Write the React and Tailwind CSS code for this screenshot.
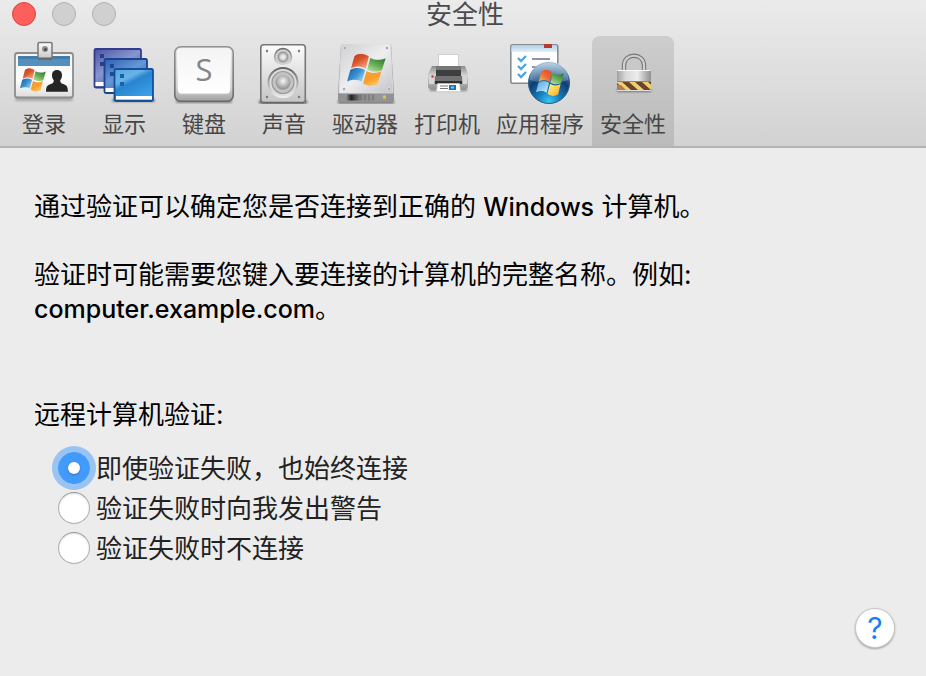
import React, { useState } from "react";

function Flag({ x, y, width, height, glow }) {
  return (
    <svg x={x} y={y} width={width} height={height} viewBox="0 0 116 98" preserveAspectRatio="none">
      <path d="M22 8C35-2 50-1 65 9L56 45C42 37 28 36 12 44Z" fill={glow ? "url(#flagRedLight)" : "url(#flagRed)"} />
      <path d="M69 13C83 20 98 21 115 14L104 49C90 56 76 55 60 48Z" fill="url(#flagGreen)" />
      <path d="M10 48C24 41 40 41 54 49L44 84C32 77 16 76 0 83Z" fill={glow ? "url(#flagBlueLight)" : "url(#flagBlue)"} />
      <path d="M58 52C72 60 88 60 102 53L92 90C78 98 62 98 48 88Z" fill={glow ? "url(#flagYellow)" : "url(#flagOrange)"} />
    </svg>
  );
}

function SharedPaints() {
  return (
    <svg className="absolute size-0" aria-hidden="true">
      <defs>
        <linearGradient id="flagRed" x1="0" y1="0" x2="0.7" y2="1">
          <stop offset="0" stopColor="#b83a12" /><stop offset="0.5" stopColor="#d8552a" /><stop offset="1" stopColor="#f4a283" />
        </linearGradient>
        <linearGradient id="flagRedLight" x1="1" y1="0" x2="0" y2="1">
          <stop offset="0" stopColor="#d94b25" /><stop offset="0.5" stopColor="#ee6a31" /><stop offset="1" stopColor="#fbc45a" />
        </linearGradient>
        <linearGradient id="flagGreen" x1="0.8" y1="0" x2="0.2" y2="1">
          <stop offset="0" stopColor="#2f7a35" /><stop offset="0.5" stopColor="#64ab50" /><stop offset="1" stopColor="#b6dba0" />
        </linearGradient>
        <linearGradient id="flagBlue" x1="0" y1="0.2" x2="1" y2="0.9">
          <stop offset="0" stopColor="#1b62a8" /><stop offset="0.5" stopColor="#3b93d2" /><stop offset="1" stopColor="#b4e0f8" />
        </linearGradient>
        <linearGradient id="flagBlueLight" x1="0" y1="0" x2="1" y2="1">
          <stop offset="0" stopColor="#4fa6e2" /><stop offset="1" stopColor="#c9edfc" />
        </linearGradient>
        <linearGradient id="flagOrange" x1="0" y1="0" x2="0.6" y2="1">
          <stop offset="0" stopColor="#f19a3c" /><stop offset="0.6" stopColor="#f9a02c" /><stop offset="1" stopColor="#fdc45c" />
        </linearGradient>
        <linearGradient id="flagYellow" x1="0" y1="0" x2="1" y2="1">
          <stop offset="0" stopColor="#fff0a0" /><stop offset="0.5" stopColor="#fcd251" /><stop offset="1" stopColor="#f2a42d" />
        </linearGradient>
        <linearGradient id="metal" x1="0" y1="0" x2="0" y2="1">
          <stop offset="0" stopColor="#fdfdfd" /><stop offset="1" stopColor="#c4c4c4" />
        </linearGradient>
        <filter id="soft" x="-20%" y="-100%" width="140%" height="300%">
          <feGaussianBlur stdDeviation="1.2" />
        </filter>
      </defs>
    </svg>
  );
}

function Icon({ children }) {
  return (
    <svg viewBox="0 0 64 64" className="size-16 shrink-0" aria-hidden="true">
      {children}
    </svg>
  );
}

function LoginIcon() {
  return (
    <Icon>
      <defs>
        <linearGradient id="card" x1="0" y1="0" x2="0" y2="1">
          <stop offset="0" stopColor="#f4f4f4" /><stop offset="0.6" stopColor="#fff" /><stop offset="1" stopColor="#dcdcdc" />
        </linearGradient>
      </defs>
      <rect x="3" y="57" width="58" height="4" rx="2" fill="#888" opacity="0.6" filter="url(#soft)" />
      <rect x="3" y="13" width="58" height="44.5" rx="2.5" fill="url(#card)" stroke="#8c8c8c" strokeWidth="1.8" />
      <rect x="6" y="16" width="52" height="10" fill="#558fbd" />
      <path d="M6 16h52v3H6z" fill="#437ba9" />
      <rect x="26" y="2.5" width="14" height="17" rx="1.5" fill="url(#metal)" stroke="#777" strokeWidth="1.5" />
      <path d="M26 18.5h14" stroke="#666" strokeWidth="2" />
      <circle cx="33" cy="9" r="3" fill="#8d8d8d" /><circle cx="33.5" cy="9.5" r="1.3" fill="#3d3d3d" />
      <Flag x="8" y="28" width="26" height="24" />
      <path d="M45 30c3.4 0 5.2 2.4 5 5.7-.2 2.4-1 3.5-1.8 4.6.1 2.4.8 3 3 3.8 3.3 1.2 4.700 2.400 4.700 7.700H34c0-5.300 1.500-6.500 4.800-7.700 2.200-.8 2.900-1.400 3-3.800-.9-1.100-1.700-2.200-1.800-4.600-.2-3.300 1.600-5.700 5-5.700z" fill="#252525" />
    </Icon>
  );
}

function DisplayIcon() {
  return (
    <Icon>
      <defs>
        <linearGradient id="d1" x1="0" y1="0" x2="0.7" y2="1"><stop offset="0" stopColor="#4a55a3" /><stop offset="0.5" stopColor="#8795cf" /><stop offset="1" stopColor="#4357a8" /></linearGradient>
        <linearGradient id="d2" x1="0" y1="0" x2="0.7" y2="1"><stop offset="0" stopColor="#2d60b0" /><stop offset="0.5" stopColor="#6696d5" /><stop offset="1" stopColor="#2a5cae" /></linearGradient>
        <linearGradient id="d3" x1="0" y1="0" x2="0.6" y2="1"><stop offset="0" stopColor="#58a5e0" /><stop offset="0.35" stopColor="#69b3e8" /><stop offset="0.5" stopColor="#2984d0" /><stop offset="1" stopColor="#3ca0e7" /></linearGradient>
      </defs>
      <rect x="20" y="59" width="43" height="3" fill="#555" opacity="0.6" filter="url(#soft)" />
      <rect x="2.5" y="9" width="46.5" height="38.5" rx="1.5" fill="url(#d1)" stroke="#343d8b" strokeWidth="1.8" />
      <rect x="3.5" y="42" width="43" height="4" fill="#fff" />
      <path d="M8 14h4v4H8zM8 22h4v4H8z" fill="#303b87" />
      <rect x="12.5" y="19" width="42.5" height="34" rx="1.5" fill="url(#d2)" stroke="#1c438e" strokeWidth="1.8" />
      <rect x="13.5" y="48" width="40" height="4" fill="#fff" />
      <path d="M18 24h4v4h-4zM18 32h4v4h-4z" fill="#1d4998" />
      <rect x="22.5" y="29" width="38.5" height="32" rx="1.5" fill="url(#d3)" stroke="#12509c" strokeWidth="1.8" />
      <rect x="24" y="56" width="36" height="3.5" fill="#fff" />
      <path d="M28 34h4v4h-4zM28 42h4v4h-4z" fill="#1761ab" />
    </Icon>
  );
}

function KeyboardIcon() {
  return (
    <Icon>
      <defs>
        <linearGradient id="keyBase" x1="0" y1="0" x2="0" y2="1"><stop offset="0" stopColor="#e5e5e5" /><stop offset="0.75" stopColor="#d3d3d3" /><stop offset="1" stopColor="#a0a0a0" /></linearGradient>
        <linearGradient id="keyEdge" x1="0" y1="0" x2="0" y2="1"><stop offset="0" stopColor="#929292" /><stop offset="1" stopColor="#6a6a6a" /></linearGradient>
        <linearGradient id="keyTop" x1="0" y1="0" x2="0" y2="1"><stop offset="0" stopColor="#f4f4f4" /><stop offset="1" stopColor="#fff" /></linearGradient>
      </defs>
      <rect x="4" y="58" width="56" height="5" rx="2" fill="#444" opacity="0.6" filter="url(#soft)" />
      <rect x="2.8" y="6.800" width="58.400" height="54.400" rx="6" fill="url(#keyBase)" stroke="url(#keyEdge)" strokeWidth="1.600" />
      <path d="M9 8h46c3 0 4 2 4 5l-1 37c0 3-2 4-4 4H10c-2 0-4-1-4-4L5 13c0-3 1-5 4-5z" fill="url(#keyTop)" />
      <path d="M7 54h50" stroke="#c8c8c8" />
      <text x="32" y="41" textAnchor="middle" fontSize="31" fill="#858585" fontFamily="'Open Sans', 'Noto Sans', sans-serif">S</text>
    </Icon>
  );
}

function SoundIcon() {
  return (
    <Icon>
      <defs>
        <radialGradient id="cone"><stop offset="0" stopColor="#f8f8f8" /><stop offset="0.3" stopColor="#d8d8d8" /><stop offset="0.55" stopColor="#999" /><stop offset="0.75" stopColor="#d5d5d5" /><stop offset="1" stopColor="#bababa" /></radialGradient>
        <radialGradient id="dome" cx="0.5" cy="0.4"><stop offset="0" stopColor="#f6f6f6" /><stop offset="1" stopColor="#9a9a9a" /></radialGradient>
        <linearGradient id="ring" x1="0" y1="0" x2="0" y2="1"><stop offset="0" stopColor="#666" /><stop offset="1" stopColor="#eee" /></linearGradient>
      </defs>
      <rect x="7" y="60" width="48" height="4" fill="#333" opacity="0.6" filter="url(#soft)" />
      <rect x="8.8" y="4.8" width="44.5" height="58" rx="3" fill="url(#metal)" stroke="#777" strokeWidth="1.6" />
      <path d="M10 62.5h42" stroke="#666" strokeWidth="1.5" />
      <circle cx="31" cy="17" r="8.5" fill="url(#cone)" stroke="url(#ring)" strokeWidth="1.5" />
      <circle cx="31" cy="42.5" r="14.5" fill="#dedede" stroke="url(#ring)" strokeWidth="2" />
      <circle cx="31" cy="42.5" r="11" fill="#c4c4c4" stroke="#999" strokeWidth="1.2" />
      <circle cx="31" cy="42.5" r="7.5" fill="url(#dome)" />
      {[15, 47].map((x) => [11, 57].map((y) => <circle key={`${x}-${y}`} cx={x} cy={y} r="1.2" fill="#777" />))}
    </Icon>
  );
}

function DriveIcon() {
  return (
    <Icon>
      <defs>
        <linearGradient id="driveTop" x1="0" y1="0" x2="1" y2="1"><stop offset="0" stopColor="#cfcfd2" /><stop offset="0.5" stopColor="#eeeef0" /><stop offset="1" stopColor="#c4c4c8" /></linearGradient>
        <linearGradient id="driveFront" x1="0" y1="0" x2="1" y2="0"><stop offset="0" stopColor="#aaa" /><stop offset="0.15" stopColor="#222" /><stop offset="0.4" stopColor="#8b8b8b" /><stop offset="1" stopColor="#999" /></linearGradient>
      </defs>
      <rect x="5" y="60" width="56" height="4" fill="#444" opacity="0.6" filter="url(#soft)" />
      <path d="M8 4h50l3 50v6q0 2-2 2H7q-2 0-2-2v-6z" fill="#929296" />
      <path d="M8.5 4h49L60 53H6z" fill="url(#driveTop)" stroke="#dfdfe1" strokeWidth="0.8" />
      <path d="M12 54.5h41v6H14z" fill="url(#driveFront)" />
      <path d="M28 54.5v6m4-6v6m4-6v6m4-6v6" stroke="#6d6d6d" />
      <rect x="50" y="55.5" width="3" height="3" fill="#d9c93c" />
      {[[12, 8], [54, 8], [11, 49], [56, 49]].map(([x, y]) => <circle key={`${x}-${y}`} cx={x} cy={y} r="1.5" fill="#999" stroke="#f4f4f4" strokeWidth="0.6" />)}
      <Flag x="14" y="13.5" width="39" height="33" />
    </Icon>
  );
}

function PrinterIcon() {
  return (
    <Icon>
      <defs>
        <linearGradient id="printerBody" x1="0" y1="0" x2="0" y2="1"><stop offset="0" stopColor="#8b8b8b" /><stop offset="0.4" stopColor="#d4d4d4" /><stop offset="1" stopColor="#929292" /></linearGradient>
      </defs>
      <rect x="15" y="48" width="37" height="3" fill="#555" opacity="0.6" filter="url(#soft)" />
      <path d="M23.5 14.5h20V28h-20z" fill="#fff" stroke="#bbb" strokeWidth="0.6" />
      <path d="M17 26h33l3 8v12q0 3-3 3H16q-3 0-3-3V34z" fill="url(#printerBody)" />
      <path d="M21 26h25v4H21z" fill="#777" />
      <path d="M21 30h25v6H21z" fill="#3e3e3e" />
      <path d="M20 36h27v5H20z" fill="#727272" />
      <path d="M14 36h5v8h-5zM48 36h4v8h-4z" fill="#d6d6d6" />
      <path d="M20 41h27v3H20z" fill="#303030" />
      <path d="M22.5 43.5h22l1 8h-24z" fill="#fff" stroke="#ccc" strokeWidth="0.6" />
      <path d="M25 46h8m-8 2.500h8" stroke="#777" />
      <path d="M34 45h7v5h-7z" fill="#1673b9" /><path d="M36 46.500h3v2h-3z" fill="#8ac9ed" />
      <circle cx="17.5" cy="36.5" r="1.2" fill="#e42c38" />
    </Icon>
  );
}

function AppsIcon() {
  return (
    <Icon>
      <defs>
        <linearGradient id="winBar" x1="0" y1="0" x2="0" y2="1"><stop offset="0" stopColor="#b5d2e7" /><stop offset="1" stopColor="#e0f0fa" /></linearGradient>
        <radialGradient id="orb" cx="0.5" cy="0.95" r="0.9"><stop offset="0" stopColor="#38c8f5" /><stop offset="0.3" stopColor="#1580be" /><stop offset="0.65" stopColor="#123c72" /><stop offset="1" stopColor="#668eaf" /></radialGradient>
        <linearGradient id="orbShine" x1="0" y1="0" x2="0" y2="1"><stop offset="0" stopColor="#e5f1fa" stopOpacity="0.7" /><stop offset="1" stopColor="#7eaad0" stopOpacity="0.35" /></linearGradient>
      </defs>
      <rect x="2.8" y="4.8" width="47" height="38.5" rx="2" fill="#fff" stroke="#858c92" strokeWidth="1.6" />
      <path d="M3.6 5.6h45.4V12H3.600z" fill="url(#winBar)" />
      <path d="M36 4h8v4h-8z" fill="#ba3732" />
      <path d="M10 18l3 3 5-5M10 26l3 3 5-5M10 34l3 3 5-5" fill="none" stroke="#4ca7dd" strokeWidth="2.3" />
      <path d="M24 19h18M24 27h14" stroke="#9291aa" strokeWidth="2" />
      <circle cx="41" cy="43" r="20.5" fill="url(#orb)" stroke="#285e88" />
      <path d="M21.5 40C22 15 60 15 60.5 40c-12 4-26 4-39 0z" fill="url(#orbShine)" />
      <Flag x="28" y="29.5" width="28" height="27" glow />
    </Icon>
  );
}

function LockIcon() {
  return (
    <Icon>
      <defs>
        <linearGradient id="lockBody" x1="0" y1="0" x2="1" y2="0"><stop offset="0" stopColor="#a2a2a2" /><stop offset="0.25" stopColor="#d8d8d8" /><stop offset="0.6" stopColor="#ececec" /><stop offset="1" stopColor="#8f8f8f" /></linearGradient>
        <clipPath id="lockStripe"><path d="M16 42h34v8H16z" /></clipPath>
      </defs>
      <rect x="16" y="49" width="34" height="3" fill="#555" opacity="0.7" filter="url(#soft)" />
      <path d="M23 31v-5.5c0-13 20-13 20 0V31" fill="none" stroke="#777" strokeWidth="4.4" />
      <path d="M23 31v-5.5c0-13 20-13 20 0V31" fill="none" stroke="#d0d0d0" strokeWidth="2.2" />
      <rect x="16" y="30" width="34" height="21" rx="1" fill="url(#lockBody)" />
      <path d="M16.5 30.5h33" stroke="#fafafa" />
      <path d="M16 41.5h34" stroke="#888" />
      <g clipPath="url(#lockStripe)">
        <path d="M16 42h34v8H16z" fill="#6b4429" />
        <path d="M15 42h6l9 8h-6zM28 42h6l9 8h-6zM41 42h6l9 8h-6z" fill="#edd070" />
        <path d="M16 45h4l5 5h-9z" fill="#b97958" />
      </g>
      <path d="M16 50.5h34" stroke="#ddd" />
    </Icon>
  );
}

const tabs = [
  ["登录", LoginIcon],
  ["显示", DisplayIcon],
  ["键盘", KeyboardIcon],
  ["声音", SoundIcon],
  ["驱动器", DriveIcon],
  ["打印机", PrinterIcon],
  ["应用程序", AppsIcon],
  ["安全性", LockIcon],
];

const options = ["即使验证失败，也始终连接", "验证失败时向我发出警告", "验证失败时不连接"];

export default function App() {
  const [tab, setTab] = useState("安全性");
  const [choice, setChoice] = useState(0);
  return (
    <div className="min-h-screen bg-[#ececec] font-[Inter,'Noto_Sans_CJK_SC',sans-serif] text-[26px] leading-[34px] text-black">
      <SharedPaints />
      <header className="border-b-2 border-[#b4b4b4] bg-linear-to-b from-[#ebebeb] to-[#d2d2d2]">
        <div className="grid h-9 grid-cols-[1fr_auto_1fr] items-start">
          <div className="flex gap-4 pt-0.5 pl-3">
            <button aria-label="关闭" className="size-6 rounded-full border border-[#e2443f] bg-[#fc605c]" />
            <button aria-label="最小化" className="size-6 rounded-full border border-[#b1b1b1] bg-[#d0d0d0]" />
            <button aria-label="缩放" className="size-6 rounded-full border border-[#b1b1b1] bg-[#d0d0d0]" />
          </div>
          <h1 className="pl-1 leading-[30px] text-[#4b4b4b]">安全性</h1>
        </div>
        <nav className="flex pl-1">
          {tabs.map(([name, Drawing]) => (
            <button
              key={name}
              onClick={() => setTab(name)}
              aria-pressed={tab === name}
              className="flex h-[110px] min-w-20 flex-col items-center rounded-t-lg px-2 pt-1 text-[22px] leading-10 text-[#464646] aria-pressed:bg-linear-to-b aria-pressed:from-[#cdcdcd] aria-pressed:to-[#bbbbbb]"
            >
              <Drawing />
              <span className="whitespace-nowrap">{name}</span>
            </button>
          ))}
        </nav>
      </header>
      <main className="px-[34px] pt-[42px]">
        <p>
          通过验证可以确定您是否连接到正确的 <span className="text-[25px] font-medium">Windows</span> 计算机。
        </p>
        <p className="mt-[34px]">
          验证时可能需要您键入要连接的计算机的完整名称。例如:
          <br />
          <span className="text-[25px] font-medium">computer.example.com</span>。
        </p>
        <fieldset className="mt-[72px]">
          <legend>远程计算机验证:</legend>
          <div className="mt-4 pl-6">
            {options.map((text, i) => (
              <label key={text} className="flex h-10 w-fit items-center gap-1.5 text-[#222222]">
                <input
                  type="radio"
                  name="verification"
                  checked={choice === i}
                  onChange={() => setChoice(i)}
                  className="grid size-8 appearance-none place-items-center rounded-full border border-[#b0b0b0] border-t-[#969696] bg-white shadow-[inset_0_1px_2px_#00000022] before:size-3 before:rounded-full before:bg-white checked:border-[#429bfa] checked:bg-[#429bfa] checked:shadow-[0_0_0_6px_#98c3f2] checked:before:shadow-[0_1px_2px_#00000044]"
                />
                <span className="pt-0.5">{text}</span>
              </label>
            ))}
          </div>
        </fieldset>
        <div className="-mr-[3px] mt-10 flex justify-end pb-7">
          <button aria-label="帮助" className="size-10 rounded-full border border-[#c8c8c8] bg-white text-[30px] leading-9 text-[#1680fb] shadow-[0_1px_2px_#00000050]">
            ?
          </button>
        </div>
      </main>
    </div>
  );
}
